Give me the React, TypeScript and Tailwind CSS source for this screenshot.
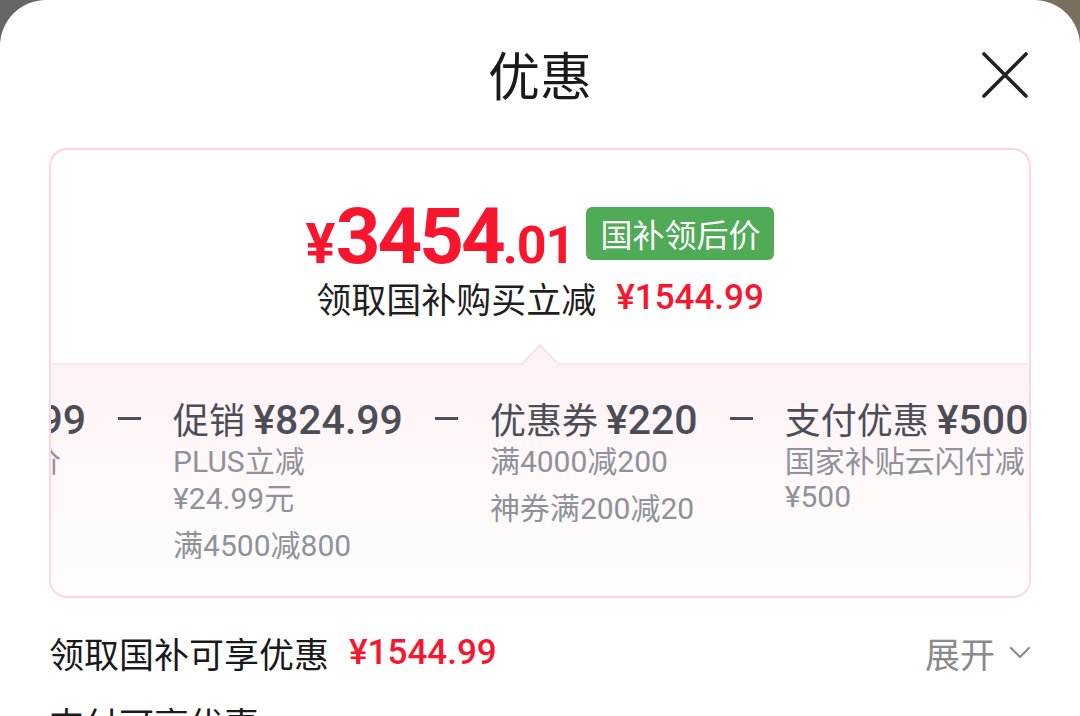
const cjk = "font-['Noto_Sans_CJK_SC',sans-serif]";
const num = "font-['Roboto','Noto_Sans_CJK_SC',sans-serif]";

interface Discount {
  label: string;
  amount: string;
  notes: string[][];
}

const discounts: Discount[] = [
  { label: "国家补贴", amount: "¥1544.99", notes: [["以旧换新享国家补贴价"]] },
  { label: "促销", amount: "¥824.99", notes: [["PLUS立减", "¥24.99元"], ["满4500减800"]] },
  { label: "优惠券", amount: "¥220", notes: [["满4000减200"], ["神券满200减20"]] },
  { label: "支付优惠", amount: "¥500", notes: [["国家补贴云闪付减", "¥500"]] },
];

// latin/digit runs set in Roboto so the numbers read like the app's DIN digits
function Mixed({ text }: { text: string }) {
  const parts = text.split(/([A-Za-z0-9.¥]+)/).filter(Boolean);
  return (
    <>
      {parts.map((p, i) =>
        /[A-Za-z0-9.¥]/.test(p) ? (
          <span key={i} className={num}>
            {p}
          </span>
        ) : (
          <span key={i}>{p}</span>
        )
      )}
    </>
  );
}

function Minus() {
  return (
    <div className="mx-[32px] flex h-[40px] shrink-0 items-center">
      <div className="h-[3px] w-[23px] bg-[#4b4e56]" />
    </div>
  );
}

function DiscountItem({ d }: { d: Discount }) {
  return (
    <div className="inline-flex shrink-0 flex-col">
      <div className="whitespace-nowrap text-[36px] leading-[40px] text-[#4b4e56]">
        <span>{d.label}</span>{" "}
        <span className={`${num} text-[41px] font-medium`}>{d.amount}</span>
      </div>
      <div className="mt-[2px] flex w-0 min-w-full flex-col gap-[10px]">
        {d.notes.map((lines, i) => (
          <div key={i} className="text-[30px] leading-[35px] text-[#8e929b]">
            {lines.map((l) => (
              <div key={l} className="whitespace-nowrap">
                <Mixed text={l} />
              </div>
            ))}
          </div>
        ))}
      </div>
    </div>
  );
}

function Chevron() {
  return (
    <svg width="22" height="14" viewBox="0 0 22 14" fill="none" stroke="#8a8a8a" strokeWidth="2.2" strokeLinecap="round" strokeLinejoin="round">
      <path d="M2 2 L11 11 L20 2" />
    </svg>
  );
}

export default function App() {
  return (
    <div className={`h-[716px] w-[1080px] overflow-hidden bg-gradient-to-r from-[#666666] to-[#7b705f] ${cjk}`}>
      <div className="h-full rounded-t-[46px] bg-white px-[49px]">
        <div className="relative flex h-[148px] items-center justify-center">
          <h1 className="text-[52px] leading-none text-[#1a1a1a]">优惠</h1>
          <svg
            className="absolute right-[3px] top-[52px]"
            width="46"
            height="46"
            viewBox="0 0 46 46"
            fill="none"
            stroke="#222"
            strokeWidth="3.6"
            strokeLinecap="round"
          >
            <path d="M2 2 L44 44 M44 2 L2 44" />
          </svg>
        </div>

        <div className="flex h-[450px] flex-col overflow-hidden rounded-[18px] border-2 border-[#fdd6e1]">
          <div className="flex h-[213px] shrink-0 flex-col items-center pt-[48px]">
            <div className="flex items-center">
              <div className={`${num} flex items-baseline font-bold text-[#f8152e]`}>
                <span className="text-[56px] leading-none">¥</span>
                <span className="text-[78px] leading-none tracking-[-3px]">3454</span>
                <span className="text-[52px] leading-none tracking-[-1px]">.01</span>
              </div>
              <div className="ml-[12px] mt-[-8px] rounded-[6px] bg-[#50ab57] px-[14px] py-[5px] text-[32px] leading-[43px] text-white">
                国补领后价
              </div>
            </div>
            <div className="flex items-center text-[35px] leading-[44px]">
              <span className="text-[#1f1f1f]">领取国补购买立减</span>
              <span className={`${num} ml-[20px] font-medium text-[#f8152e]`}>¥1544.99</span>
            </div>
          </div>

          <div className="relative flex-1 border-t-2 border-[#fde3ea] bg-gradient-to-b from-[#fff3f6] to-[#fffdfd]">
            <svg
              className="absolute left-1/2 top-[-22px] -translate-x-1/2"
              width="40"
              height="24"
              viewBox="0 0 40 24"
            >
              <path d="M1 22 L20 2 L39 22" fill="#fff3f6" stroke="#fde3ea" strokeWidth="2" />
            </svg>
            <div className="overflow-hidden pt-[33px]">
              <div className="ml-[-290px] flex items-start">
                {discounts.map((d, i) => (
                  <div key={d.label} className="flex shrink-0 items-start">
                    {i > 0 && <Minus />}
                    <DiscountItem d={d} />
                  </div>
                ))}
              </div>
            </div>
          </div>
        </div>

        <div className="flex h-[106px] items-center justify-between pt-[4px]">
          <div className="flex items-center text-[35px] leading-[44px]">
            <span className="text-[#1a1a1a]">领取国补可享优惠</span>
            <span className={`${num} ml-[20px] font-medium text-[#f8152e]`}>¥1544.99</span>
          </div>
          <div className="flex items-center text-[35px] leading-[44px] text-[#8a8a8a]">
            <span>展开</span>
            <span className="ml-[14px]">
              <Chevron />
            </span>
          </div>
        </div>
        <div className="text-[35px] leading-[38px] text-[#1a1a1a]">支付可享优惠</div>
      </div>
    </div>
  );
}
